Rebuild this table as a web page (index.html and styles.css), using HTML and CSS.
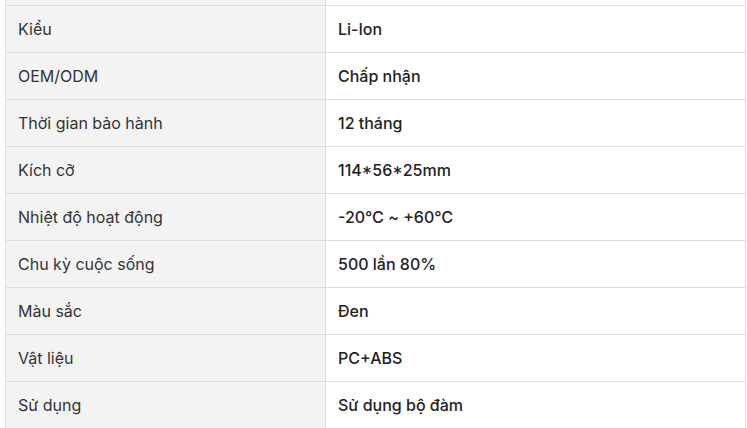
FILE: index.html
```html
<!DOCTYPE html>
<html lang="vi">
<head>
<meta charset="utf-8">
<link rel="stylesheet" href="styles.css">
</head>
<body>
<table class="spec">
  <tr class="cut"><td class="k"></td><td class="v"></td></tr>
  <tr><td class="k">Kiểu</td><td class="v">Li-Ion</td></tr>
  <tr><td class="k">OEM/ODM</td><td class="v">Chấp nhận</td></tr>
  <tr><td class="k">Thời gian bảo hành</td><td class="v">12 tháng</td></tr>
  <tr><td class="k">Kích cỡ</td><td class="v">114*56*25mm</td></tr>
  <tr><td class="k">Nhiệt độ hoạt động</td><td class="v">-20℃ ~ +60℃</td></tr>
  <tr><td class="k">Chu kỳ cuộc sống</td><td class="v">500 lần 80%</td></tr>
  <tr><td class="k">Màu sắc</td><td class="v">Đen</td></tr>
  <tr><td class="k">Vật liệu</td><td class="v">PC+ABS</td></tr>
  <tr><td class="k">Sử dụng</td><td class="v">Sử dụng bộ đàm</td></tr>
</table>
</body>
</html>
```
FILE: styles.css
```css
html, body {
  margin: 0;
  padding: 0;
  background: #ffffff;
}
body {
  padding-left: 5px;
  font-family: Inter, "Liberation Sans", sans-serif;
  font-size: 16px;
  color: #333333;
}
.spec {
  border-collapse: collapse;
  width: 741px;
  table-layout: fixed;
}
.spec td {
  border: 1px solid #dddddd;
  height: 47px;
  padding: 0 12px;
  box-sizing: border-box;
  vertical-align: middle;
}
.spec td.k {
  width: 320px;
  background: #f3f3f3;
  color: #333333;
}
.spec td.v {
  background: #ffffff;
  color: #222222;
  font-weight: 500;
}
.spec tr.cut td {
  height: 5px;
  border-top: none;
}
```
